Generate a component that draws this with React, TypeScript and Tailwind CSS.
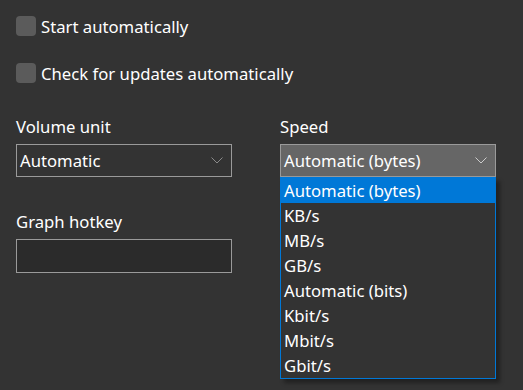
import React from 'react';

const speedOptions = [
  'Automatic (bytes)',
  'KB/s',
  'MB/s',
  'GB/s',
  'Automatic (bits)',
  'Kbit/s',
  'Mbit/s',
  'Gbit/s',
];

function Chevron({ color }: { color: string }) {
  return (
    <svg width="12" height="7" viewBox="0 0 12 7" fill="none" className="shrink-0">
      <path d="M0.5 0.5 L6 6 L11.5 0.5" stroke={color} strokeWidth="1" />
    </svg>
  );
}

function Checkbox({ label }: { label: string }) {
  return (
    <label className="flex items-center gap-[5px] h-5">
      <span className="w-5 h-5 rounded-[4px] bg-[#5b5b5b]" />
      <span className="text-[16.7px] leading-5 pt-px">{label}</span>
    </label>
  );
}

export default function App() {
  return (
    <div className="w-[523px] h-[390px] overflow-hidden bg-[#333333] text-white pl-4 pt-4 font-['Noto_Sans',sans-serif]">
      <div className="flex flex-col gap-[27px]">
        <Checkbox label="Start automatically" />
        <Checkbox label="Check for updates automatically" />
      </div>

      <div className="grid grid-cols-[216px_216px] gap-x-[48px] mt-[34px]">
        <div>
          <div className="text-[16.7px] leading-5 mb-[7px]">Volume unit</div>
          <div className="h-[33px] border border-[#9a9a9a] flex items-center justify-between pl-[3px] pr-[8px]">
            <span className="text-[16.7px]">Automatic</span>
            <Chevron color="#8a8a8a" />
          </div>
        </div>

        <div>
          <div className="text-[16.7px] leading-5 mb-[7px]">Speed</div>
          <div className="relative">
            <div className="h-[33px] border border-[#9a9a9a] bg-[#666666] flex items-center justify-between pl-[3px] pr-[8px]">
              <span className="text-[16.7px]">Automatic (bytes)</span>
              <Chevron color="#cccccc" />
            </div>
            <div className="absolute left-0 top-full w-[216px] border border-[#0078d7] bg-[#333333] shadow-[4px_4px_4px_rgba(0,0,0,0.35)] z-10">
              {speedOptions.map((opt, i) => (
                <div
                  key={opt}
                  className={
                    i === 0
                      ? 'h-[25px] leading-[25px] px-[3px] text-[16.7px] bg-[#0078d7]'
                      : 'h-[25px] leading-[25px] px-[3px] text-[16.7px]'
                  }
                >
                  {opt}
                </div>
              ))}
            </div>
          </div>
        </div>

        <div className="mt-[35px]">
          <div className="text-[16.7px] leading-5 mb-[7px]">Graph hotkey</div>
          <div className="h-[34px] border border-[#9a9a9a] bg-[#2b2b2b]" />
        </div>
      </div>
    </div>
  );
}
